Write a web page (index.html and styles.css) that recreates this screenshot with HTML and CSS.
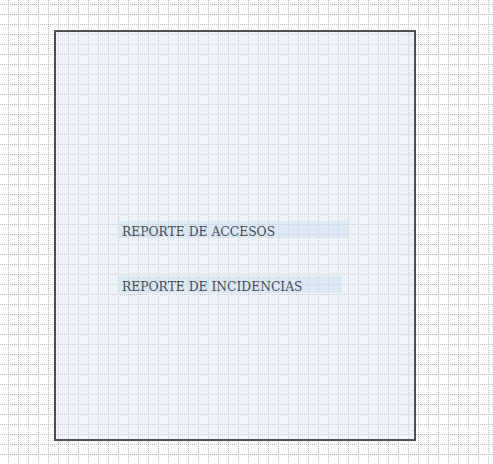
FILE: index.html
```html
<!DOCTYPE html>
<html lang="es">

<head>
    <meta charset="UTF-8">
    <meta name="viewport" content="width=device-width, initial-scale=1.0">
    <title>Reportes</title>
    <link rel="stylesheet" href="styles.css">
</head>

<body>
    <div class="panel">
        <ul class="reports">
            <li class="report accesos"><a href="javascript:;">REPORTE DE ACCESOS</a></li>
            <li class="report incidencias"><a href="javascript:;">REPORTE DE INCIDENCIAS</a></li>
        </ul>
    </div>
</body>

</html>
```

FILE: styles.css
```css
*{
    margin: 0;padding: 0;
    box-sizing: border-box;
}
ul{
    list-style: none;
}
a{
    text-decoration: none;
    color: inherit;
}
body{
    min-height: 100vh;
    padding: 30px 0 0 54px;
    background-color: #fff;
    /* checker on top makes the solid lines dotted */
    background-image:
        repeating-conic-gradient(#fff 0 25%, transparent 0 50%),
        linear-gradient(to bottom, transparent 4px, #b9b9b9 4px, #b9b9b9 5px, transparent 5px),
        linear-gradient(to right, transparent 8px, #b9b9b9 8px, #b9b9b9 9px, transparent 9px);
    background-size: 2px 2px, 10px 10px, 10px 10px;
    font-family: "DejaVu Serif", Georgia, serif;
}
.panel{
    width: 362px;
    height: 411px;
    border: 2px solid #4b4f55;
    background-color: rgba(214, 228, 242, 0.42);
    padding: 189px 0 0 62px;
}
.reports{
    display: flex;
    flex-direction: column;
    gap: 38px;
}
.report{
    height: 17px;
    padding-left: 4px;
    background-color: rgba(200, 220, 240, 0.45);
    color: #414953;
    font-size: 12.3px;
    line-height: 23px;
    white-space: nowrap;
}
.accesos{
    width: 230px;
}
.incidencias{
    width: 224px;
}
```
